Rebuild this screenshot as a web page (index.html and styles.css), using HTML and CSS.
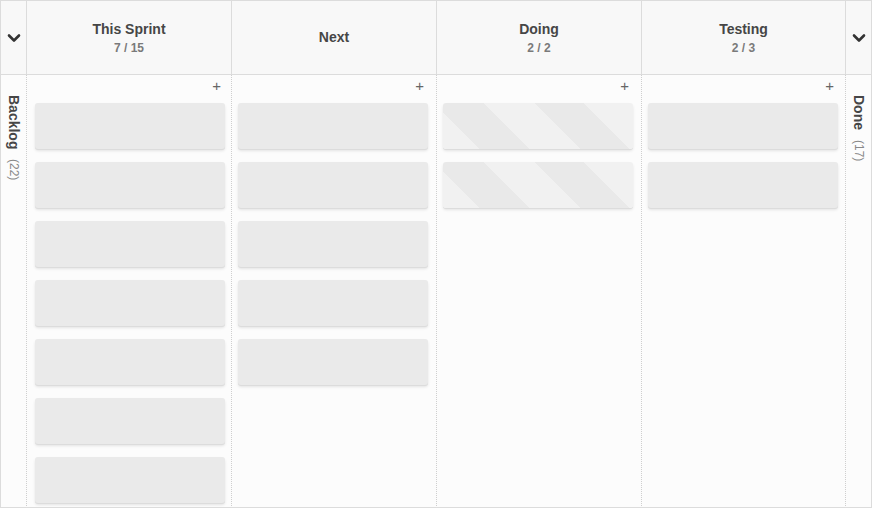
FILE: index.html
```html
<!DOCTYPE html>
<html>
<head>
<meta charset="utf-8">
<link rel="stylesheet" href="styles.css">
</head>
<body>
<div class="board">
  <div class="head side">
    <svg class="chev" width="14" height="10" viewBox="0 0 14 10"><path d="M2 2.5 L7 7.5 L12 2.5" fill="none" stroke="#333" stroke-width="2.6" stroke-linecap="round" stroke-linejoin="round"/></svg>
  </div>
  <div class="head col"><div class="title">This Sprint</div><div class="count">7 / 15</div></div>
  <div class="head col"><div class="title">Next</div></div>
  <div class="head col"><div class="title">Doing</div><div class="count">2 / 2</div></div>
  <div class="head col"><div class="title">Testing</div><div class="count">2 / 3</div></div>
  <div class="head side last">
    <svg class="chev" width="14" height="10" viewBox="0 0 14 10"><path d="M2 2.5 L7 7.5 L12 2.5" fill="none" stroke="#333" stroke-width="2.6" stroke-linecap="round" stroke-linejoin="round"/></svg>
  </div>

  <div class="body side"><div class="vert"><b>Backlog</b><span>(22)</span></div></div>
  <div class="body col first">
    <div class="add">+</div>
    <div class="card"></div><div class="card"></div><div class="card"></div><div class="card"></div><div class="card"></div><div class="card"></div><div class="card"></div>
  </div>
  <div class="body col">
    <div class="add">+</div>
    <div class="card"></div><div class="card"></div><div class="card"></div><div class="card"></div><div class="card"></div>
  </div>
  <div class="body col">
    <div class="add">+</div>
    <div class="card striped"></div><div class="card striped"></div>
  </div>
  <div class="body col">
    <div class="add">+</div>
    <div class="card"></div><div class="card"></div>
  </div>
  <div class="body side last"><div class="vert"><b>Done</b><span>(17)</span></div></div>
</div>
</body>
</html>
```
FILE: styles.css
```css
html, body { margin: 0; padding: 0; background: #fff; }
body { font-family: "Liberation Sans", Arial, sans-serif; }
.board {
  width: 872px; height: 508px; box-sizing: border-box;
  border: 1px solid #dcdcdc;
  display: grid;
  grid-template-columns: 26px 205px 205px 205px 204px 25px;
  grid-template-rows: 74px 1fr;
  background: #fcfcfc;
  overflow: hidden;
}
.head {
  background: #f8f8f8;
  border-bottom: 1px solid #dcdcdc;
  border-right: 1px solid #dcdcdc;
  display: flex; flex-direction: column; align-items: center; justify-content: center;
}
.head.last, .body.last { border-right: none; }
.chev { display: block; }
.title { font-size: 14px; font-weight: bold; color: #464646; line-height: 17px; }
.count { font-size: 12px; font-weight: bold; color: #7a7a7a; line-height: 14px; margin-top: 3px; }
.body { border-right: 1px dotted #cfcfcf; display: flex; flex-direction: column; }
.body.col { padding: 0 0 0 6px; }
.body.col.first { padding-left: 8px; }
.add { width: 190px; height: 28px; text-align: right; font-size: 15px; color: #666; line-height: 22px; box-sizing: border-box; padding-right: 4px; }
.card {
  width: 190px; height: 46px; margin-bottom: 13px; flex: none;
  background: #eaeaea;
  border-radius: 3px;
  box-shadow: 0 1px 0 #dcdcdc, 0 2px 3px rgba(0,0,0,0.10);
}
.striped {
  background: repeating-linear-gradient(45deg, #f1f1f1 0 26px, #e9e9e9 26px 61px, #f1f1f1 61px 71px);
}
.side.body { align-items: center; }
.vert {
  writing-mode: vertical-rl;
  margin-top: 20px;
  font-size: 14px; color: #464646;
  display: flex; align-items: center;
}
.vert b { font-weight: bold; }
.vert span { font-size: 12px; color: #888; margin-top: 10px; }
```
